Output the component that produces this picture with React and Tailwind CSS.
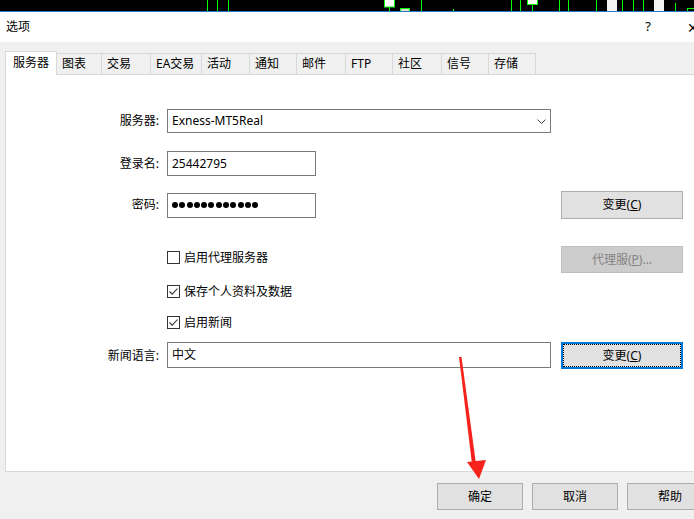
import React from "react";

const tabs = [
  { label: "服务器", w: "w-[52px]", active: true },
  { label: "图表", w: "w-[45px]" },
  { label: "交易", w: "w-[49px]" },
  { label: "EA交易", w: "w-[51px]" },
  { label: "活动", w: "w-[48px]" },
  { label: "通知", w: "w-[47px]" },
  { label: "邮件", w: "w-[49px]" },
  { label: "FTP", w: "w-[47px]" },
  { label: "社区", w: "w-[49px]" },
  { label: "信号", w: "w-[47px]" },
  { label: "存储", w: "w-[47px]" },
];

// green lines of the chart window behind the dialog
const lines = [
  [207, 0], [217, 0], [228, 0], [421, 0], [453, 9], [511, 0], [520, 0],
  [559, 0], [568, 0], [596, 0], [622, 0], [633, 0], [643, 0], [675, 3],
];

function ChartStrip() {
  return (
    <svg width="694" height="12" className="block">
      <rect x="0" y="0" width="694" height="11" fill="#000" />
      {lines.map(([x, y], i) => (
        <line key={i} x1={x + 0.5} y1={y} x2={x + 0.5} y2="11" stroke="#00ff00" strokeWidth="1" />
      ))}
      <line x1="389.5" y1="7" x2="389.5" y2="11" stroke="#00ff00" />
      <rect x="384.5" y="-1" width="10" height="8" fill="#fff" stroke="#00ff00" />
      <rect x="400.5" y="8.5" width="9" height="4" fill="#ddd" stroke="#00ff00" />
      <line x1="532.5" y1="4" x2="532.5" y2="11" stroke="#00ff00" />
      <rect x="527.5" y="-1" width="10" height="5.5" fill="#fff" stroke="#00ff00" />
      <rect x="607" y="0" width="10" height="11" fill="#f4f4f4" />
      <rect x="654" y="0" width="10" height="11" fill="#f4f4f4" />
      <rect x="687.5" y="8.5" width="8" height="4" fill="none" stroke="#00ff00" />
      <rect x="0" y="11" width="694" height="1" fill="#2b79c9" />
    </svg>
  );
}

function Checkbox({ checked, label }) {
  return (
    <div className="flex items-center h-[13px]">
      <div className="w-[13px] h-[13px] border border-[#333] bg-white flex items-center justify-center">
        {checked && (
          <svg width="11" height="11" viewBox="0 0 11 11">
            <path d="M1.5 5.5 L4.2 8.2 L9.5 2.5" fill="none" stroke="#333" strokeWidth="1.1" />
          </svg>
        )}
      </div>
      <span className="ml-[4px] leading-none">{label}</span>
    </div>
  );
}

function Button({ children, className = "" }) {
  return (
    <button className={`flex items-center justify-center border border-[#adadad] bg-[#e1e1e1] text-black ${className}`}>
      {children}
    </button>
  );
}

export default function App() {
  return (
    <div
      className="relative w-[694px] h-[519px] overflow-hidden bg-[#f0f0f0] text-[12px] text-black"
      style={{ fontFamily: '"Noto Sans", "Noto Sans CJK SC", sans-serif' }}
    >
      <ChartStrip />

      {/* Title bar */}
      <div className="h-[30px] bg-white flex items-center relative">
        <span className="pl-[6px]">选项</span>
        <span className="ml-auto mr-[36px] text-[13px]">?</span>
        <span className="mr-[-5px] text-[14px]">✕</span>
      </div>

      <div className="w-[722px]">
        {/* Tabs */}
        <div className="flex items-end pt-[9px] pl-[5px]">
          {tabs.map((t) =>
            t.active ? (
              <div
                key={t.label}
                className={`${t.w} h-[24px] bg-white border-t border-x border-[#d9d9d9] flex items-center pl-[7px] pb-[2px]`}
              >
                {t.label}
              </div>
            ) : (
              <div
                key={t.label}
                className={`${t.w} h-[22px] border-t border-r border-b border-[#d9d9d9] flex items-center pl-[5px]`}
              >
                {t.label}
              </div>
            )
          )}
          <div className="flex-1 border-b border-[#d9d9d9]" />
        </div>

        {/* Panel */}
        <div className="mx-[5px] h-[397px] pt-[34px] bg-white border-x border-b border-[#d9d9d9]">
          <div className="flex items-center h-[24px]">
            <span className="w-[153px] text-right mr-[8px]">服务器:</span>
            <div className="w-[384px] h-[24px] border border-[#7a7a7a] flex items-center pl-[4px]">
              <span>Exness-MT5Real</span>
              <svg width="9" height="5" viewBox="0 0 9 5" className="ml-auto mr-[4px]">
                <path d="M0.5 0.5 L4.5 4.5 L8.5 0.5" fill="none" stroke="#444" />
              </svg>
            </div>
          </div>

          <div className="flex items-center h-[25px] mt-[18px]">
            <span className="w-[153px] text-right mr-[8px]">登录名:</span>
            <div className="w-[149px] h-[25px] border border-[#7a7a7a] flex items-center pl-[4px]">
              25442795
            </div>
          </div>

          <div className="flex items-center h-[28px] mt-[15px]">
            <span className="w-[153px] text-right mr-[8px]">密码:</span>
            <div className="w-[384px]">
              <div className="w-[149px] h-[25px] border border-[#7a7a7a] flex items-center pl-[4px] gap-[1.3px]">
                {Array.from({ length: 12 }).map((_, i) => (
                  <span key={i} className="w-[6px] h-[6px] rounded-full bg-black" />
                ))}
              </div>
            </div>
            <Button className="ml-[10px] w-[122px] h-[28px]">
              变更(<u>C</u>)
            </Button>
          </div>

          <div className="flex h-[27px] mt-[27px]">
            <span className="w-[153px] mr-[8px]" />
            <div className="w-[384px] pt-[5px]">
              <Checkbox label="启用代理服务器" />
            </div>
            <button className="ml-[10px] w-[122px] h-[27px] flex items-center justify-center border border-[#bfbfbf] bg-[#cccccc] text-[#838383]">
              代理服(<u>P</u>)...
            </button>
          </div>

          <div className="flex mt-[12px]">
            <span className="w-[153px] mr-[8px]" />
            <Checkbox checked label="保存个人资料及数据" />
          </div>

          <div className="flex mt-[18px]">
            <span className="w-[153px] mr-[8px]" />
            <Checkbox checked label="启用新闻" />
          </div>

          <div className="flex items-center h-[27px] mt-[13px]">
            <span className="w-[153px] text-right mr-[8px]">新闻语言:</span>
            <div className="w-[384px] h-[26px] border border-[#7a7a7a] flex items-center pl-[4px] self-start">
              中文
            </div>
            <button className="ml-[10px] w-[122px] h-[27px] flex items-center justify-center border-2 border-[#0078d7] bg-[#e1e1e1] outline-1 outline-dotted outline-black -outline-offset-3">
              变更(<u>C</u>)
            </button>
          </div>
        </div>

        {/* Bottom buttons */}
        <div className="flex justify-end gap-[9px] pt-[11px] pr-[9px]">
          <Button className="w-[86px] h-[27px]">确定</Button>
          <Button className="w-[86px] h-[27px]">取消</Button>
          <Button className="w-[86px] h-[27px]">帮助</Button>
        </div>
      </div>

      {/* Red arrow annotation */}
      <svg className="absolute left-0 top-0 pointer-events-none" width="694" height="519">
        <polygon points="459,357 461.5,357 476,464 472,464" fill="#f5231b" />
        <polygon points="467,462 486,460 479,479" fill="#f5231b" />
      </svg>
    </div>
  );
}
